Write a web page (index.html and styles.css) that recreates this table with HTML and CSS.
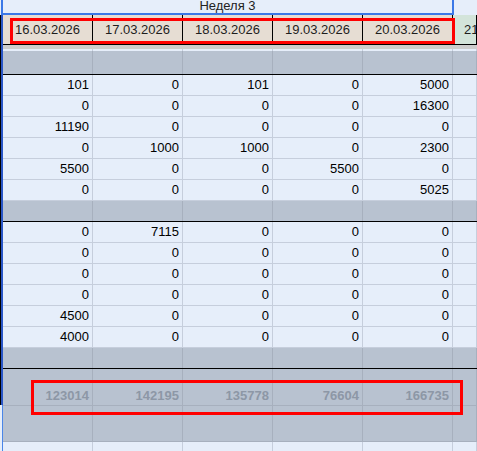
FILE: index.html
```html
<!DOCTYPE html>
<html lang="ru">
<head>
<meta charset="utf-8">
<title>Неделя 3</title>
<link rel="stylesheet" href="styles.css">
</head>
<body>
<div class="sheet">
  <div class="week-row">
    <div class="week-cell">Неделя 3</div>
    <div class="week-rest"></div>
  </div>
  <div class="body">
    <div class="edge"><div class="edge-top"></div><div class="edge-bottom"></div></div>
    <div class="grid">
      <div class="row dates">
        <div class="c">16.03.2026</div><div class="c">17.03.2026</div><div class="c">18.03.2026</div><div class="c">19.03.2026</div><div class="c">20.03.2026</div><div class="c next">21.03.2026</div>
      </div>
      <div class="frozen"></div>
      <div class="row sliver"><div class="c"></div><div class="c"></div><div class="c"></div><div class="c"></div><div class="c"></div><div class="c"></div></div>
      <div class="row band first"><div class="c"></div><div class="c"></div><div class="c"></div><div class="c"></div><div class="c"></div><div class="c"></div></div>

      <div class="row data"><div class="c">101</div><div class="c">0</div><div class="c">101</div><div class="c">0</div><div class="c">5000</div><div class="c"></div></div>
      <div class="row data"><div class="c">0</div><div class="c">0</div><div class="c">0</div><div class="c">0</div><div class="c">16300</div><div class="c"></div></div>
      <div class="row data"><div class="c">11190</div><div class="c">0</div><div class="c">0</div><div class="c">0</div><div class="c">0</div><div class="c"></div></div>
      <div class="row data"><div class="c">0</div><div class="c">1000</div><div class="c">1000</div><div class="c">0</div><div class="c">2300</div><div class="c"></div></div>
      <div class="row data"><div class="c">5500</div><div class="c">0</div><div class="c">0</div><div class="c">5500</div><div class="c">0</div><div class="c"></div></div>
      <div class="row data"><div class="c">0</div><div class="c">0</div><div class="c">0</div><div class="c">0</div><div class="c">5025</div><div class="c"></div></div>

      <div class="row band"><div class="c"></div><div class="c"></div><div class="c"></div><div class="c"></div><div class="c"></div><div class="c"></div></div>

      <div class="row data"><div class="c">0</div><div class="c">7115</div><div class="c">0</div><div class="c">0</div><div class="c">0</div><div class="c"></div></div>
      <div class="row data"><div class="c">0</div><div class="c">0</div><div class="c">0</div><div class="c">0</div><div class="c">0</div><div class="c"></div></div>
      <div class="row data"><div class="c">0</div><div class="c">0</div><div class="c">0</div><div class="c">0</div><div class="c">0</div><div class="c"></div></div>
      <div class="row data"><div class="c">0</div><div class="c">0</div><div class="c">0</div><div class="c">0</div><div class="c">0</div><div class="c"></div></div>
      <div class="row data"><div class="c">4500</div><div class="c">0</div><div class="c">0</div><div class="c">0</div><div class="c">0</div><div class="c"></div></div>
      <div class="row data"><div class="c">4000</div><div class="c">0</div><div class="c">0</div><div class="c">0</div><div class="c">0</div><div class="c"></div></div>

      <div class="row band"><div class="c"></div><div class="c"></div><div class="c"></div><div class="c"></div><div class="c"></div><div class="c"></div></div>

      <div class="row total"><div class="c">123014</div><div class="c">142195</div><div class="c">135778</div><div class="c">76604</div><div class="c">166735</div><div class="c"></div></div>
      <div class="row tail"><div class="c"></div><div class="c"></div><div class="c"></div><div class="c"></div><div class="c"></div><div class="c"></div></div>
      <div class="row data last"><div class="c"></div><div class="c"></div><div class="c"></div><div class="c"></div><div class="c"></div><div class="c"></div></div>
    </div>
  </div>
  <div class="mark mark-dates"></div>
  <div class="mark mark-totals"></div>
</div>
</body>
</html>
```

FILE: styles.css
```css
html, body {
  margin: 0;
  padding: 0;
  background: #e6eefa;
}

.sheet {
  position: relative;
  width: 477px;
  height: 451px;
  overflow: hidden;
  background: #e6eefa;
  font-family: "Liberation Sans", Arial, sans-serif;
  font-size: 13px;
  color: #111;
}

.week-row {
  display: flex;
  height: 15px;
}

.week-cell {
  box-sizing: border-box;
  margin-left: 1px;
  width: 453px;
  height: 15px;
  border: 2px solid #3b78e7;
  border-top: none;
  background: #e6eefa;
  text-align: center;
  line-height: 12px;
  color: #222;
}

.week-rest {
  flex: 1;
  background: #e6eefa;
}

.body {
  display: flex;
}

.edge {
  width: 3px;
  display: flex;
  flex-direction: column;
}

.edge-top {
  height: 390px;
  background: linear-gradient(to right, #000 1px, #2a56c6 1px);
}

.edge-bottom {
  flex: 1;
  height: 60px;
  background: linear-gradient(to right, #e6eefa 2px, #4a86e8 2px);
}

.grid {
  flex: 1;
  display: flex;
  flex-direction: column;
}

.row {
  display: grid;
  grid-template-columns: repeat(5, 90px) 1fr;
  box-sizing: border-box;
}

.c {
  box-sizing: border-box;
  border-right: 1px solid #c6cedc;
  overflow: hidden;
  white-space: nowrap;
}

/* date header row */
.dates {
  height: 30px;
  border-bottom: 1px solid #000;
  background: #e6ddd3;
}

.dates .c {
  border-right-color: #000;
  text-align: center;
  line-height: 29px;
  color: #1e1e1e;
}

.dates .next {
  background: #d3e4da;
  text-align: left;
  padding-left: 11px;
}

.frozen {
  height: 4px;
  background: #cdcdcd;
}

.sliver {
  height: 2px;
  background: #e6eefa;
}

/* gray separator bands */
.band {
  height: 21px;
  background: #b8c2d0;
  border-bottom: 1px solid #000;
}

.band.first {
  height: 24px;
}

.band .c,
.total .c,
.tail .c {
  border-right-color: #a7b0be;
}

/* data rows */
.data {
  height: 21px;
  border-bottom: 1px solid #c6cedc;
  background: #e6eefa;
}

.data .c {
  text-align: right;
  padding-right: 3px;
  line-height: 20px;
  color: #000;
}

.data.last {
  height: 20px;
  border-bottom: none;
}

/* totals */
.total {
  height: 37px;
  background: #b8c2d0;
  border-bottom: 1px solid #a7b0be;
}

.total .c {
  display: flex;
  align-items: flex-end;
  justify-content: flex-end;
  padding-right: 3px;
  padding-bottom: 2px;
  line-height: 15px;
  font-weight: bold;
  color: #8d97a6;
}

.tail {
  height: 36px;
  background: #b8c2d0;
  border-bottom: 1px solid #a7b0be;
}

/* red highlight frames */
.mark {
  position: absolute;
  box-sizing: border-box;
  border: 3px solid #ff0000;
}

.mark-dates {
  left: 10px;
  top: 18px;
  width: 445px;
  height: 26px;
}

.mark-totals {
  left: 31px;
  top: 380px;
  width: 432px;
  height: 35px;
}
```
